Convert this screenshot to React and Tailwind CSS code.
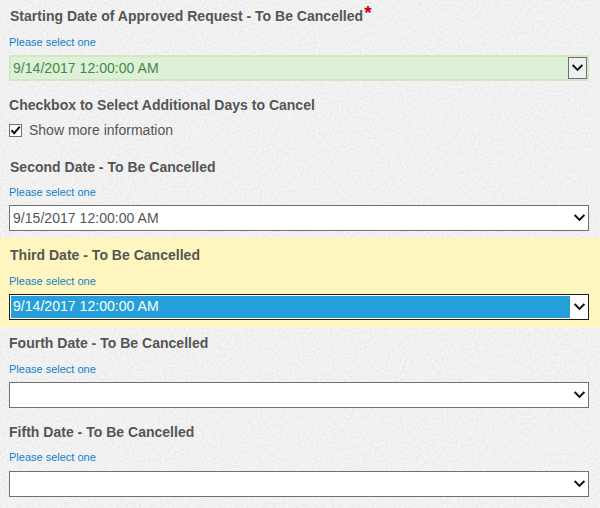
import React, { useState } from 'react';
import clsx from 'clsx';

const DATE_FIELDS = [
  { id: 'second', label: 'Second Date - To Be Cancelled', value: '9/15/2017 12:00:00 AM', box: 'h-[88px] pt-[7px]', indent: 'pl-px', hintGap: 'mt-[7px]' },
  { id: 'third', label: 'Third Date - To Be Cancelled', value: '9/14/2017 12:00:00 AM', box: 'h-[89px] pt-[7px]', indent: 'pl-px', hintGap: 'mt-[8px]', active: true },
  { id: 'fourth', label: 'Fourth Date - To Be Cancelled', value: '', box: 'h-[88px] pt-[6px]', hintGap: 'mt-[8px]' },
  { id: 'fifth', label: 'Fifth Date - To Be Cancelled', value: '', box: 'h-[93px] pt-[7px]', hintGap: 'mt-[7px]', selectGap: 'mt-[6px]' },
];

// Fine paper grain behind the whole form
const PaperTexture = () => (
  <svg className="absolute inset-0 -z-10 h-full w-full" aria-hidden="true">
    <filter id="grain" x="0" y="0" width="100%" height="100%" colorInterpolationFilters="sRGB">
      <feTurbulence type="fractalNoise" baseFrequency="0.43" numOctaves="3" seed="4" />
      <feColorMatrix
        values="0.06 0.06 0 0 0.884
                0.06 0.06 0 0 0.884
                0.06 0.06 0 0 0.884
                0 0 0 0 1"
      />
    </filter>
    <rect width="100%" height="100%" filter="url(#grain)" />
  </svg>
);

const Chevron = () => (
  <svg width="11" height="8" viewBox="0 0 11 8" fill="none" stroke="#111118" strokeWidth="2">
    <path d="M0.6 1 L5.5 5.9 L10.4 1" />
  </svg>
);

const Label = ({ children, required, className }) => (
  <div className={clsx('flex h-5 text-[14px] leading-5 font-bold tracking-[0.015px] whitespace-nowrap text-[#555555]', className)}>
    {children}
    {required && <span className="-mt-[3px] ml-px text-[19px] leading-5 text-[#c00000]">*</span>}
  </div>
);

const Hint = ({ className }) => (
  <div className={clsx('h-4 text-[11px] leading-4 text-[#1080cc]', className)}>Please select one</div>
);

const Select = ({ value, approved, active }) => (
  <div
    className={clsx(
      'flex h-[26px] w-[580px] border text-[14px] tracking-[0.04px]',
      approved && 'border-2 border-[#d1e9c1] bg-[#dff0d8] text-[#468847]',
      active && 'border-[#1c1c24] bg-white p-px text-white',
      !approved && !active && 'border-[#707070] bg-white text-[#555555]'
    )}
  >
    <div
      className={clsx(
        'flex flex-1 items-center',
        approved && 'pl-[2px]',
        active && 'bg-[#26a0da] pb-[2px] pl-[2px]',
        !approved && !active && 'pl-[3px]'
      )}
    >
      {value}
    </div>
    <div
      className={clsx(
        'flex shrink-0 items-center justify-center',
        approved && 'w-[19px] border border-[#707070] bg-[#f0f0f0] pb-px',
        active && 'w-[17px] pl-[2px]',
        !approved && !active && 'w-[18px]'
      )}
    >
      <Chevron />
    </div>
  </div>
);

const DateField = ({ field }) => (
  <div className={clsx('pl-[9px]', field.box, field.active && 'bg-[#fff6bf]')}>
    <Label className={field.indent}>{field.label}</Label>
    <Hint className={field.hintGap} />
    <div className={field.selectGap || 'mt-[5px]'}>
      <Select value={field.value} active={field.active} />
    </div>
  </div>
);

const App = () => {
  const [showMore, setShowMore] = useState(true);

  return (
    <div className="relative isolate h-[508px] w-[600px] overflow-hidden bg-[#f0f0f0] font-['Liberation_Sans',Arial,sans-serif]">
      <PaperTexture />

      <div className="h-[89px] pt-[6px] pl-[9px]">
        <Label required className="pl-px">Starting Date of Approved Request - To Be Cancelled</Label>
        <Hint className="mt-[8px]" />
        <div className="mt-[5px]">
          <Select value="9/14/2017 12:00:00 AM" approved />
        </div>
      </div>

      <div className="h-[61px] pt-[6px] pl-[9px]">
        <Label>Checkbox to Select Additional Days to Cancel</Label>
        <label className="mt-[5px] flex h-5 items-center text-[14px] leading-5 text-[#555555]">
          <input type="checkbox" className="sr-only" checked={showMore} onChange={() => setShowMore(!showMore)} />
          <span className="mr-[7px] flex h-[13px] w-[13px] items-center justify-center border border-[#707070] bg-white">
            {showMore && (
              <svg width="11" height="11" viewBox="0 0 11 11" fill="none" stroke="#111111" strokeWidth="2">
                <path d="M1.4 5.2 L4.2 8.2 L9.8 1.6" />
              </svg>
            )}
          </span>
          Show more information
        </label>
      </div>

      {showMore && DATE_FIELDS.map((field) => <DateField key={field.id} field={field} />)}
    </div>
  );
};

export default App;
